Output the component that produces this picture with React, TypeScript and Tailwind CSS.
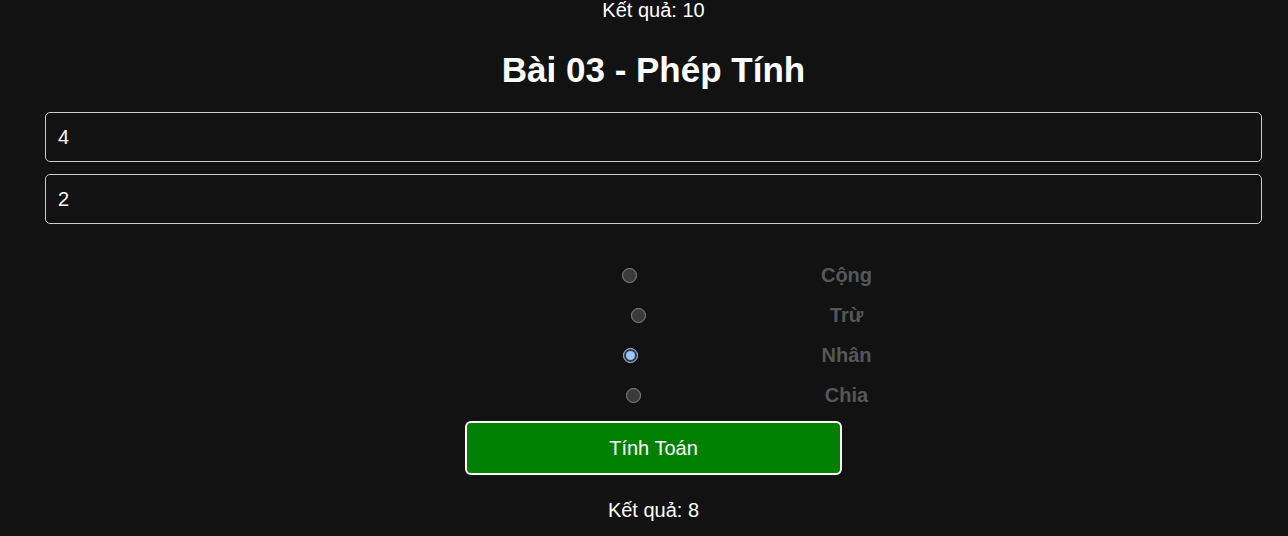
import { useState } from 'react';

const ops = [
  { key: 'add', label: 'Cộng' },
  { key: 'sub', label: 'Trừ' },
  { key: 'mul', label: 'Nhân' },
  { key: 'div', label: 'Chia' },
];

export default function App() {
  const [a, setA] = useState('4');
  const [b, setB] = useState('2');
  const [op, setOp] = useState('mul');
  const [result, setResult] = useState<number | string>(8);

  const calc = () => {
    const x = parseFloat(a);
    const y = parseFloat(b);
    if (op === 'add') setResult(x + y);
    else if (op === 'sub') setResult(x - y);
    else if (op === 'mul') setResult(x * y);
    else setResult(y === 0 ? 'Không chia được' : x / y);
  };

  return (
    <div className="min-h-[536px] bg-[#121212] text-white font-['Liberation_Sans',Arial,sans-serif] overflow-hidden">
      <div className="ml-[45px] w-[1217px]">
        <p className="text-center text-[20px] leading-[20px]">Kết quả: 10</p>

        <h1 className="mt-[30px] text-center text-[35px] leading-[40px] font-bold">Bài 03 - Phép Tính</h1>

        <div className="mt-[22px] flex flex-col gap-[12px]">
          <input
            value={a}
            onChange={(e) => setA(e.target.value)}
            className="h-[50px] px-[12px] text-[20px] bg-[#121212] text-white border border-[#cccccc] rounded-[5px] outline-none"
          />
          <input
            value={b}
            onChange={(e) => setB(e.target.value)}
            className="h-[50px] px-[12px] text-[20px] bg-[#121212] text-white border border-[#cccccc] rounded-[5px] outline-none"
          />
        </div>

        <div className="mt-[31px] pl-[187px] flex flex-col">
          {ops.map((o) => (
            <label key={o.key} className="h-[40px] flex items-center justify-center gap-[184px] cursor-pointer">
              <input
                type="radio"
                name="op"
                checked={op === o.key}
                onChange={() => setOp(o.key)}
                className="m-0 w-[15px] h-[15px] [color-scheme:dark]"
              />
              <span className="text-[20px] font-bold text-[#575757]">{o.label}</span>
            </label>
          ))}
        </div>

        <div className="mt-[6px] flex justify-center">
          <button
            onClick={calc}
            className="w-[377px] h-[54px] bg-[#008000] border-2 border-white rounded-[6px] text-[20px] text-white"
          >
            Tính Toán
          </button>
        </div>

        <p className="mt-[24px] text-center text-[20px] leading-[23px]">Kết quả: {result}</p>
      </div>
    </div>
  );
}
